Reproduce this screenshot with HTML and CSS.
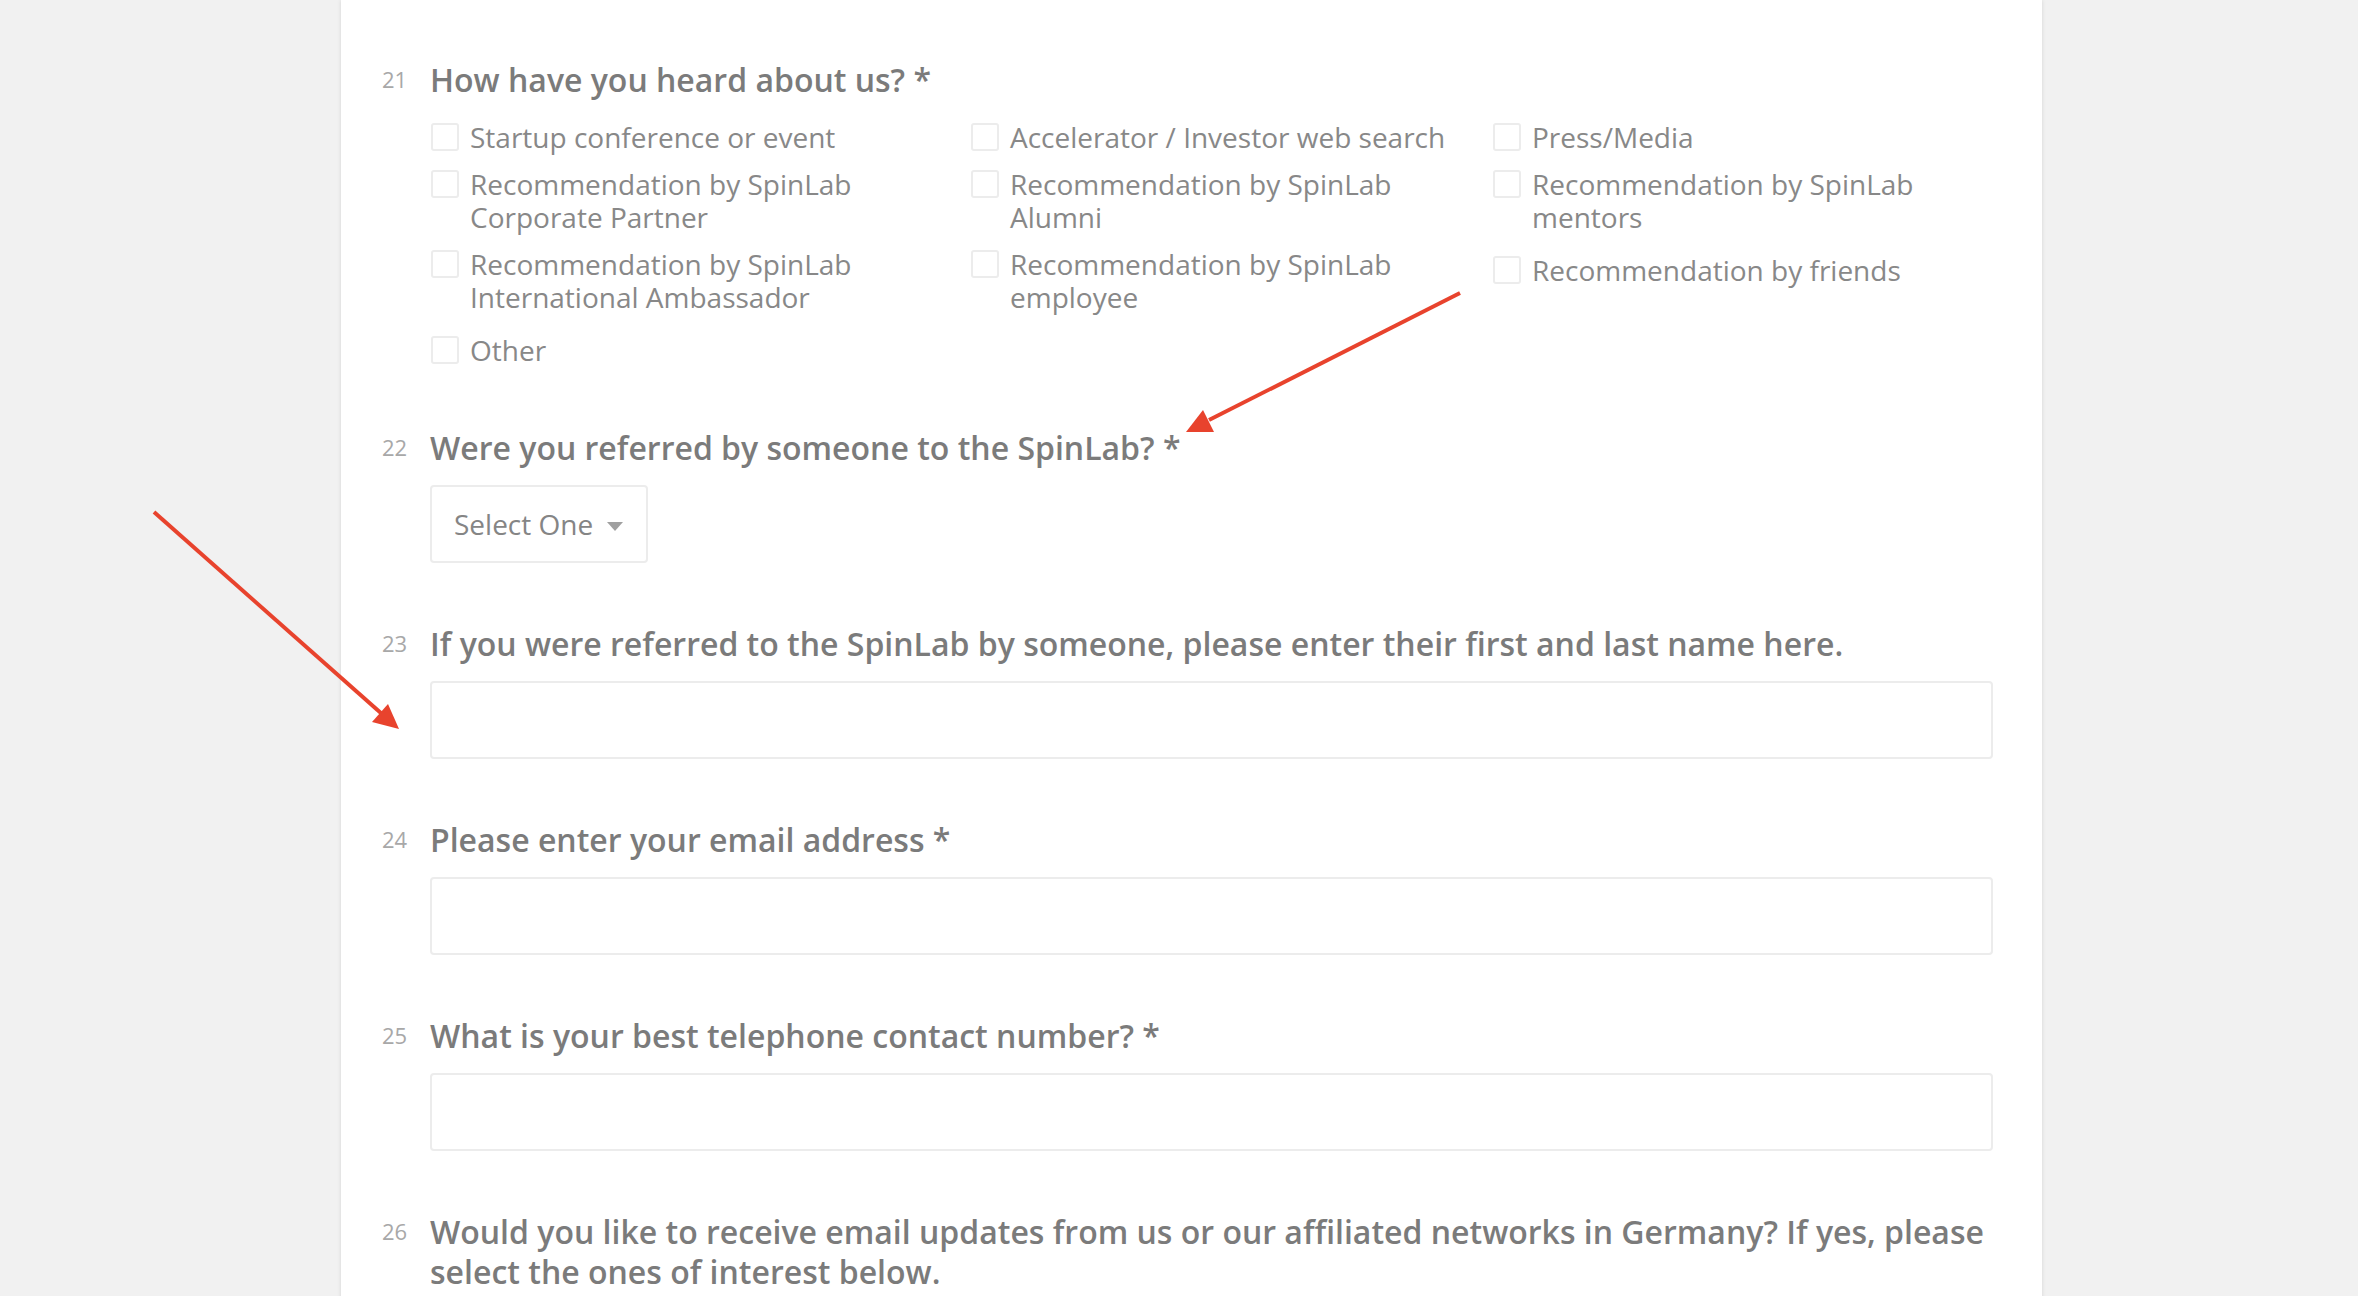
FILE: index.html
```html
<!DOCTYPE html>
<html lang="en">
<head>
    <meta charset="UTF-8">
    <meta name="viewport" content="width=device-width, initial-scale=1.0">
    <title>SpinLab Application</title>
    <link rel="stylesheet" href="styles.css">
</head>
<body>

    <div class="form-card">

        <div class="question">
            <span class="q-num">21</span>
            <div class="q-body">
                <h2 class="q-title">How have you heard about us? *</h2>
                <div class="options">
                    <label class="option"><span class="box"></span><span class="opt-text">Startup conference or event</span></label>
                    <label class="option"><span class="box"></span><span class="opt-text">Accelerator / Investor web search</span></label>
                    <label class="option"><span class="box"></span><span class="opt-text">Press/Media</span></label>
                    <label class="option"><span class="box"></span><span class="opt-text">Recommendation by SpinLab Corporate Partner</span></label>
                    <label class="option"><span class="box"></span><span class="opt-text">Recommendation by SpinLab Alumni</span></label>
                    <label class="option"><span class="box"></span><span class="opt-text">Recommendation by SpinLab mentors</span></label>
                    <label class="option"><span class="box"></span><span class="opt-text">Recommendation by SpinLab International Ambassador</span></label>
                    <label class="option"><span class="box"></span><span class="opt-text">Recommendation by SpinLab employee</span></label>
                    <label class="option option-low"><span class="box"></span><span class="opt-text">Recommendation by friends</span></label>
                    <label class="option option-low"><span class="box"></span><span class="opt-text">Other</span></label>
                </div>
            </div>
        </div>

        <div class="question">
            <span class="q-num">22</span>
            <div class="q-body">
                <h2 class="q-title">Were you referred by someone to the SpinLab? *</h2>
                <div class="select">
                    <span>Select One</span>
                    <span class="caret"></span>
                </div>
            </div>
        </div>

        <div class="question">
            <span class="q-num">23</span>
            <div class="q-body">
                <h2 class="q-title">If you were referred to the SpinLab by someone, please enter their first and last name here.</h2>
                <input type="text" class="field">
            </div>
        </div>

        <div class="question">
            <span class="q-num">24</span>
            <div class="q-body">
                <h2 class="q-title">Please enter your email address *</h2>
                <input type="email" class="field">
            </div>
        </div>

        <div class="question">
            <span class="q-num">25</span>
            <div class="q-body">
                <h2 class="q-title">What is your best telephone contact number? *</h2>
                <input type="text" class="field">
            </div>
        </div>

        <div class="question">
            <span class="q-num">26</span>
            <div class="q-body">
                <h2 class="q-title">Would you like to receive email updates from us or our affiliated networks in Germany? If yes, please select the ones of interest below.</h2>
            </div>
        </div>

    </div>

    <!-- annotation arrows drawn over the form -->
    <svg class="arrows" width="2358" height="1296" viewBox="0 0 2358 1296">
        <line x1="1460" y1="293" x2="1209" y2="420" stroke="#e8432d" stroke-width="4"/>
        <polygon points="1186,432 1203,410 1214,432" fill="#e8432d"/>
        <line x1="154" y1="512" x2="382" y2="714" stroke="#e8432d" stroke-width="4"/>
        <polygon points="399,729 372,722 388,704" fill="#e8432d"/>
    </svg>

</body>
</html>
```

FILE: styles.css
```css
      body {
          font-family: "Open Sans", "Liberation Sans", sans-serif;
          background-color: #f1f1f1;
          margin: 0;
          padding: 0;
          height: 1296px;
          overflow: hidden;
          position: relative;
      }

      .form-card {
          margin-left: 341px;
          width: 1701px;
          min-height: 1296px;
          box-sizing: border-box;
          background-color: #fff;
          box-shadow: 0 0 4px rgba(0, 0, 0, 0.12);
          padding: 60px 49px 0 41px;
      }

      .question {
          display: flex;
          margin-bottom: 61px;
      }

      .q-num {
          width: 48px;
          flex-shrink: 0;
          font-size: 22px;
          line-height: 28px;
          padding-top: 5px;
          color: #a8a8a8;
      }

      .q-body {
          flex: 1;
      }

      .q-title {
          margin: 0 0 17px 0;
          font-size: 32px;
          line-height: 40px;
          font-weight: 600;
          color: #7b7b7b;
      }

      .options {
          display: grid;
          grid-template-columns: 540px 522px 1fr;
          row-gap: 14px;
          padding-top: 4px;
      }

      .option {
          display: flex;
          align-items: flex-start;
          padding-right: 30px;
          font-size: 28px;
          line-height: 33px;
          color: #888;
      }

      .option-low {
          margin-top: 6px;
      }

      .box {
          width: 24px;
          height: 24px;
          margin: 2px 11px 0 1px;
          flex-shrink: 0;
          border: 2px solid #ececec;
          border-radius: 3px;
      }

      .select {
          display: inline-flex;
          align-items: center;
          height: 78px;
          box-sizing: border-box;
          padding: 0 23px 0 22px;
          border: 2px solid #ececec;
          border-radius: 4px;
          font-size: 28px;
          color: #858585;
      }

      .caret {
          width: 0;
          height: 0;
          margin-left: 14px;
          margin-top: 4px;
          border-left: 8px solid transparent;
          border-right: 8px solid transparent;
          border-top: 9px solid #a0a0a0;
      }

      .field {
          display: block;
          width: 100%;
          height: 78px;
          box-sizing: border-box;
          border: 2px solid #ececec;
          border-radius: 4px;
          background: #fff;
          font-family: inherit;
          font-size: 28px;
      }

      .arrows {
          position: absolute;
          left: 0;
          top: 0;
          pointer-events: none;
      }
```
